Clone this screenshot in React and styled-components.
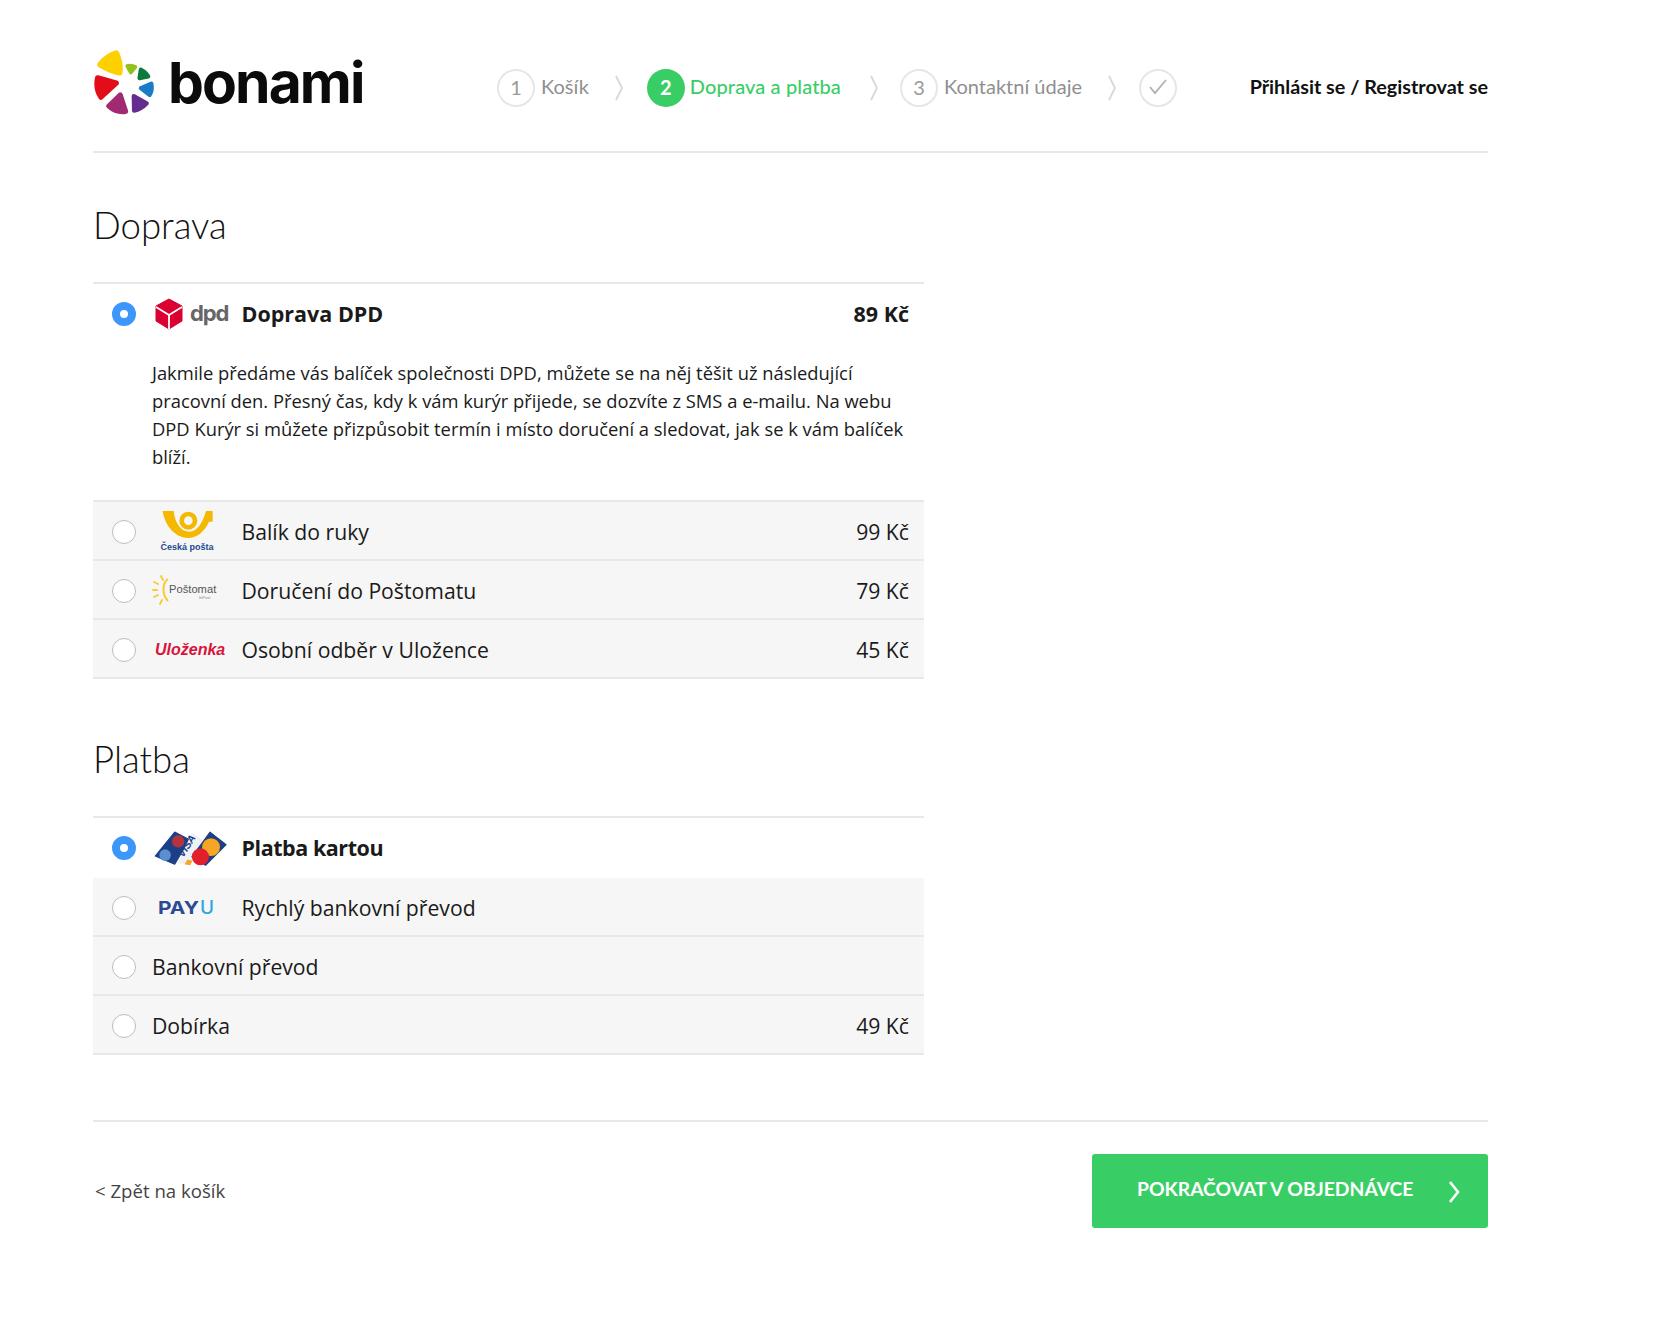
import React from 'react'
import styled, { createGlobalStyle } from 'styled-components'

const Global = createGlobalStyle`
* { box-sizing: border-box; }
body {
  margin: 0;
  background: #fff;
  color: #1a1a1a;
  font-family: "Open Sans", "Noto Sans", sans-serif;
}
`

const Page = styled.div`
  width: 1395px;
  margin-left: 93px;
`

const Header = styled.header`
  height: 153px;
  padding-top: 24px;
  display: flex;
  align-items: center;
  border-bottom: 2px solid #e8e8e8;
`

const Brand = styled.div`
  display: flex;
  align-items: center;
  width: 404px;
  margin-top: -10px;
`

const Wordmark = styled.span`
  font-family: "Inter", sans-serif;
  font-weight: 700;
  font-size: 57px;
  line-height: 1;
  color: #0b0b0b;
  margin-left: 12px;
  letter-spacing: -1.9px;
`

const Steps = styled.nav`
  display: flex;
  align-items: center;
  font-family: "Lato", sans-serif;
  font-size: 20px;
`

const StepCircle = styled.span`
  width: 38px;
  height: 38px;
  border-radius: 50%;
  display: flex;
  align-items: center;
  justify-content: center;
  padding-bottom: 2px;
  border: ${p => (p.$active ? 'none' : '2px solid #e6e6e6')};
  background: ${p => (p.$active ? '#39ce65' : '#fff')};
  color: ${p => (p.$active ? '#fff' : '#9a9a9a')};
  font-weight: ${p => (p.$active ? 700 : 400)};
`

const StepLabel = styled.span`
  margin-left: ${p => (p.$active ? '5px' : '6px')};
  padding-bottom: 4px;
  color: ${p => (p.$active ? '#39ce65' : '#8f8f8f')};
  font-weight: ${p => (p.$active ? 500 : 400)};
  letter-spacing: ${p => (p.$active ? '0.12px' : '0')};
`

const StepArrow = styled.svg`
  width: 10px;
  height: 26px;
  margin: ${p => p.$margin};
  fill: none;
  stroke: #d8d8d8;
  stroke-width: 1.8;
`

const LoginLink = styled.a`
  margin-left: auto;
  padding-bottom: 4px;
  font-family: "Lato", sans-serif;
  font-size: 19.8px;
  font-weight: 700;
  color: #111;
`

const SectionTitle = styled.h2`
  margin: ${p => p.$margin};
  font-family: "Lato", sans-serif;
  font-weight: 300;
  font-size: 36.6px;
  line-height: 44px;
  color: #111;
`

const OptionList = styled.div`
  width: 831px;
  border-top: 2px solid #e8e8e8;
`

const Option = styled.div`
  background: ${p => (p.$selected ? '#fff' : '#f6f6f6')};
  border-bottom: ${p => (p.$plain ? 'none' : '2px solid #e8e8e8')};
`

const OptionName = styled.span`
  flex: 1;
  letter-spacing: ${p => p.$spacing || 'normal'};
`

const Price = styled.span`
  white-space: nowrap;
`

const OptionRow = styled.div`
  height: ${p => (p.$tall ? '60px' : '57px')};
  display: flex;
  align-items: center;
  padding: ${p => (p.$tall ? '0' : '2px')} 15px 0 19px;
  font-size: ${p => (p.$selected ? '21.5px' : '21.2px')};
  font-weight: ${p => (p.$selected ? 700 : 400)};
  ${OptionName}, ${Price} {
    padding-bottom: ${p => (p.$selected ? '2px' : '1px')};
  }
`

const Radio = styled.span`
  flex: none;
  width: 24px;
  height: 24px;
  border-radius: 50%;
  background: #fff;
  border: ${p => (p.$on ? '8px solid #3d97fb' : '1.5px solid #bdbdbd')};
  margin-right: 16px;
`

const LogoSlot = styled.span`
  flex: none;
  width: 89.5px;
  height: 48px;
  display: flex;
  align-items: center;
  padding-left: ${p => p.$inset || 0}px;
`

const Description = styled.p`
  margin: 15px 10px 29px 59px;
  font-size: 18.35px;
  line-height: 28px;
  color: #1a1a1a;
`

const Footer = styled.footer`
  margin-top: 65px;
  padding-top: 32px;
  border-top: 2px solid #e8e8e8;
  display: flex;
  align-items: center;
  justify-content: space-between;
`

const BackLink = styled.a`
  margin-left: 2px;
  padding-bottom: 2px;
  font-size: 18.6px;
  color: #444;
`

const ContinueButton = styled.button`
  width: 396px;
  height: 74px;
  border: none;
  border-radius: 3px;
  background: #39ce65;
  color: #fff;
  font-family: "Lato", sans-serif;
  font-size: 19.3px;
  font-weight: 700;
  display: flex;
  align-items: center;
  justify-content: space-between;
  padding: 0 28px 0 45px;
  svg {
    width: 12px;
    height: 24px;
    margin-top: 2px;
    fill: none;
    stroke: #fff;
    stroke-width: 2.6;
  }
`

const ButtonText = styled.span`
  padding-bottom: 6px;
`

const LogoText = styled.text`
  font-family: ${p => p.$font || '"Liberation Sans", sans-serif'};
  font-weight: ${p => p.$weight || 700};
  font-style: ${p => (p.$italic ? 'italic' : 'normal')};
`

function Petal({ d, color, width }) {
  return <path d={d} fill={color} stroke={color} strokeWidth={width} strokeLinejoin="round" />
}

function BonamiFlower() {
  return (
    <svg width="63" height="67" viewBox="98 88 190 200">
      <Petal d="M168 100Q182 130 178 158Q150 152 120 134Q138 110 168 100Z" color="#fdd000" width="18" />
      <Petal d="M201 138Q214 135 226 141L212 158Z" color="#95c11f" width="11" />
      <Petal d="M242 149Q257 156 265 170L238 175Z" color="#0c7a3c" width="12" />
      <Petal d="M274 191Q279 210 269 226L242 205Z" color="#1a7cc7" width="12" />
      <Petal d="M221 229L260 251Q243 269 222 273Z" color="#662d91" width="13" />
      <Petal d="M180 226L196 275Q168 279 146 259Z" color="#a12a72" width="16" />
      <Petal d="M112 174L168 190L122 232Q105 206 112 174Z" color="#e30d1a" width="16" />
    </svg>
  )
}

function DpdLogo() {
  return (
    <svg width="74" height="32" viewBox="0 0 74 32">
      <path d="M14 1L27 8V23L14 31L1 23V8Z" fill="#dc0032" stroke="#dc0032" strokeLinejoin="round" />
      <path d="M14 17V31M14 17L27 9M14 17L1 9" stroke="#fff" strokeWidth="1.8" fill="none" />
      <LogoText x="35" y="23" fontSize="22" $font='"Inter", sans-serif' $weight={700} letterSpacing="-1.1" fill="#666">dpd</LogoText>
    </svg>
  )
}

function PostaLogo() {
  return (
    <svg width="56" height="46" viewBox="0 0 56 46">
      <g transform="translate(-9 -4) scale(.3333)">
        <path d="M35 18H185V50H174C160 82 135 99 112 99C75 99 42 65 35 18Z" fill="#f5b800" />
        <path d="M68 18C72 55 90 80 115 80C140 80 155 52 165 18Z" fill="#f6f6f6" />
        <circle cx="112" cy="47" r="20" fill="none" stroke="#f5b800" strokeWidth="14" />
      </g>
      <LogoText x="27" y="41" fontSize="9" textAnchor="middle" fill="#1c4a8e">Česká pošta</LogoText>
    </svg>
  )
}

function PostomatLogo() {
  return (
    <svg width="68" height="32" viewBox="0 0 68 32">
      <g stroke="#f7c933" strokeWidth="1.8" strokeLinecap="round">
        <path d="M9 1L11 5M2 7L6 9M1 15H5M2 22L6 20M8 29L10 25" />
      </g>
      <path d="M16 4C10 8 10 20 16 26" stroke="#f7c933" strokeWidth="2" fill="none" />
      <LogoText x="17" y="18" fontSize="11.2" $weight={400} fill="#555">Poštomat</LogoText>
      <LogoText x="47" y="24" fontSize="4" $weight={400} fill="#888">InPost</LogoText>
    </svg>
  )
}

function CardsLogo() {
  return (
    <svg width="74" height="37" viewBox="15 22 215 108">
      <path d="M18 98L75 28L118 50L75 122Z" fill="#1d3f86" stroke="#1d3f86" strokeWidth="3" strokeLinejoin="round" />
      <circle cx="85" cy="55" r="18" fill="#b5343c" />
      <circle cx="47" cy="95" r="17" fill="#5a8fd0" />
      <path d="M85 118L125 30L155 50L120 125Z" fill="#eef1f6" />
      <path d="M104 122L120 125L127 112L112 108Z" fill="#f5a623" />
      <LogoText transform="translate(100 104) rotate(-58)" fontSize="30" $italic fill="#1d3f86">VISA</LogoText>
      <path d="M125 100L178 28L225 65L165 125Z" fill="#1d3f86" stroke="#1d3f86" strokeWidth="3" strokeLinejoin="round" />
      <circle cx="181" cy="72" r="26" fill="#f5a623" />
      <circle cx="150" cy="100" r="25" fill="#e2202c" />
    </svg>
  )
}

function PayuLogo() {
  return (
    <svg width="60" height="24" viewBox="0 0 60 24">
      <LogoText x="0" y="18" fontSize="18" textLength="41" lengthAdjust="spacingAndGlyphs" $font='"Inter", sans-serif' fill="#2c4a94">PAY</LogoText>
      <LogoText x="42" y="18" fontSize="18" textLength="14" lengthAdjust="spacingAndGlyphs" $font='"Inter", sans-serif' $weight={500} fill="#2ea6e0">U</LogoText>
    </svg>
  )
}

function UlozenkaLogo() {
  return (
    <svg width="80" height="24" viewBox="0 0 80 24">
      <LogoText x="0" y="17" fontSize="16" $italic fill="#d8143a">Uloženka</LogoText>
    </svg>
  )
}

function StepChevron({ margin }) {
  return (
    <StepArrow $margin={margin} viewBox="0 0 10 26">
      <path d="M2 1L8 13L2 25" />
    </StepArrow>
  )
}

function Check() {
  return (
    <svg width="18" height="16" viewBox="0 0 18 16" fill="none" stroke="#b0b0b0" strokeWidth="1.8">
      <path d="M1 8L6 14L17 1" />
    </svg>
  )
}

export default function App() {
  return (
    <>
      <Global />
      <Page>
        <Header>
          <Brand>
            <BonamiFlower />
            <Wordmark>bonami</Wordmark>
          </Brand>
          <Steps>
            <StepCircle>1</StepCircle>
            <StepLabel>Košík</StepLabel>
            <StepChevron margin="0 23px 0 25px" />
            <StepCircle $active>2</StepCircle>
            <StepLabel $active>Doprava a platba</StepLabel>
            <StepChevron margin="0 21px 0 28px" />
            <StepCircle>3</StepCircle>
            <StepLabel>Kontaktní údaje</StepLabel>
            <StepChevron margin="0 22px 0 25px" />
            <StepCircle><Check /></StepCircle>
          </Steps>
          <LoginLink>Přihlásit se / Registrovat se</LoginLink>
        </Header>

        <SectionTitle $margin="50px 0 35px">Doprava</SectionTitle>
        <OptionList>
          <Option $selected>
            <OptionRow $selected $tall>
              <Radio $on />
              <LogoSlot $inset={3}><DpdLogo /></LogoSlot>
              <OptionName>Doprava DPD</OptionName>
              <Price>89 Kč</Price>
            </OptionRow>
            <Description>
              Jakmile předáme vás balíček společnosti DPD, můžete se na něj těšit už následující pracovní den. Přesný čas, kdy k vám kurýr přijede, se dozvíte z SMS a e-mailu. Na webu DPD Kurýr si můžete přizpůsobit termín i místo doručení a sledovat, jak se k vám balíček blíží.
            </Description>
          </Option>
          <Option>
            <OptionRow>
              <Radio />
              <LogoSlot $inset={8}><PostaLogo /></LogoSlot>
              <OptionName>Balík do ruky</OptionName>
              <Price>99 Kč</Price>
            </OptionRow>
          </Option>
          <Option>
            <OptionRow>
              <Radio />
              <LogoSlot><PostomatLogo /></LogoSlot>
              <OptionName>Doručení do Poštomatu</OptionName>
              <Price>79 Kč</Price>
            </OptionRow>
          </Option>
          <Option>
            <OptionRow>
              <Radio />
              <LogoSlot $inset={3}><UlozenkaLogo /></LogoSlot>
              <OptionName>Osobní odběr v Uložence</OptionName>
              <Price>45 Kč</Price>
            </OptionRow>
          </Option>
        </OptionList>

        <SectionTitle $margin="58px 0 35px">Platba</SectionTitle>
        <OptionList>
          <Option $selected $plain>
            <OptionRow $selected $tall>
              <Radio $on />
              <LogoSlot $inset={2}><CardsLogo /></LogoSlot>
              <OptionName $spacing="-0.45px">Platba kartou</OptionName>
            </OptionRow>
          </Option>
          <Option>
            <OptionRow>
              <Radio />
              <LogoSlot $inset={6}><PayuLogo /></LogoSlot>
              <OptionName>Rychlý bankovní převod</OptionName>
            </OptionRow>
          </Option>
          <Option>
            <OptionRow>
              <Radio />
              <OptionName>Bankovní převod</OptionName>
            </OptionRow>
          </Option>
          <Option>
            <OptionRow>
              <Radio />
              <OptionName>Dobírka</OptionName>
              <Price>49 Kč</Price>
            </OptionRow>
          </Option>
        </OptionList>

        <Footer>
          <BackLink>&lt; Zpět na košík</BackLink>
          <ContinueButton>
            <ButtonText>POKRAČOVAT V OBJEDNÁVCE</ButtonText>
            <svg viewBox="0 0 12 24"><path d="M2 2L10 12L2 22" /></svg>
          </ContinueButton>
        </Footer>
      </Page>
    </>
  )
}
